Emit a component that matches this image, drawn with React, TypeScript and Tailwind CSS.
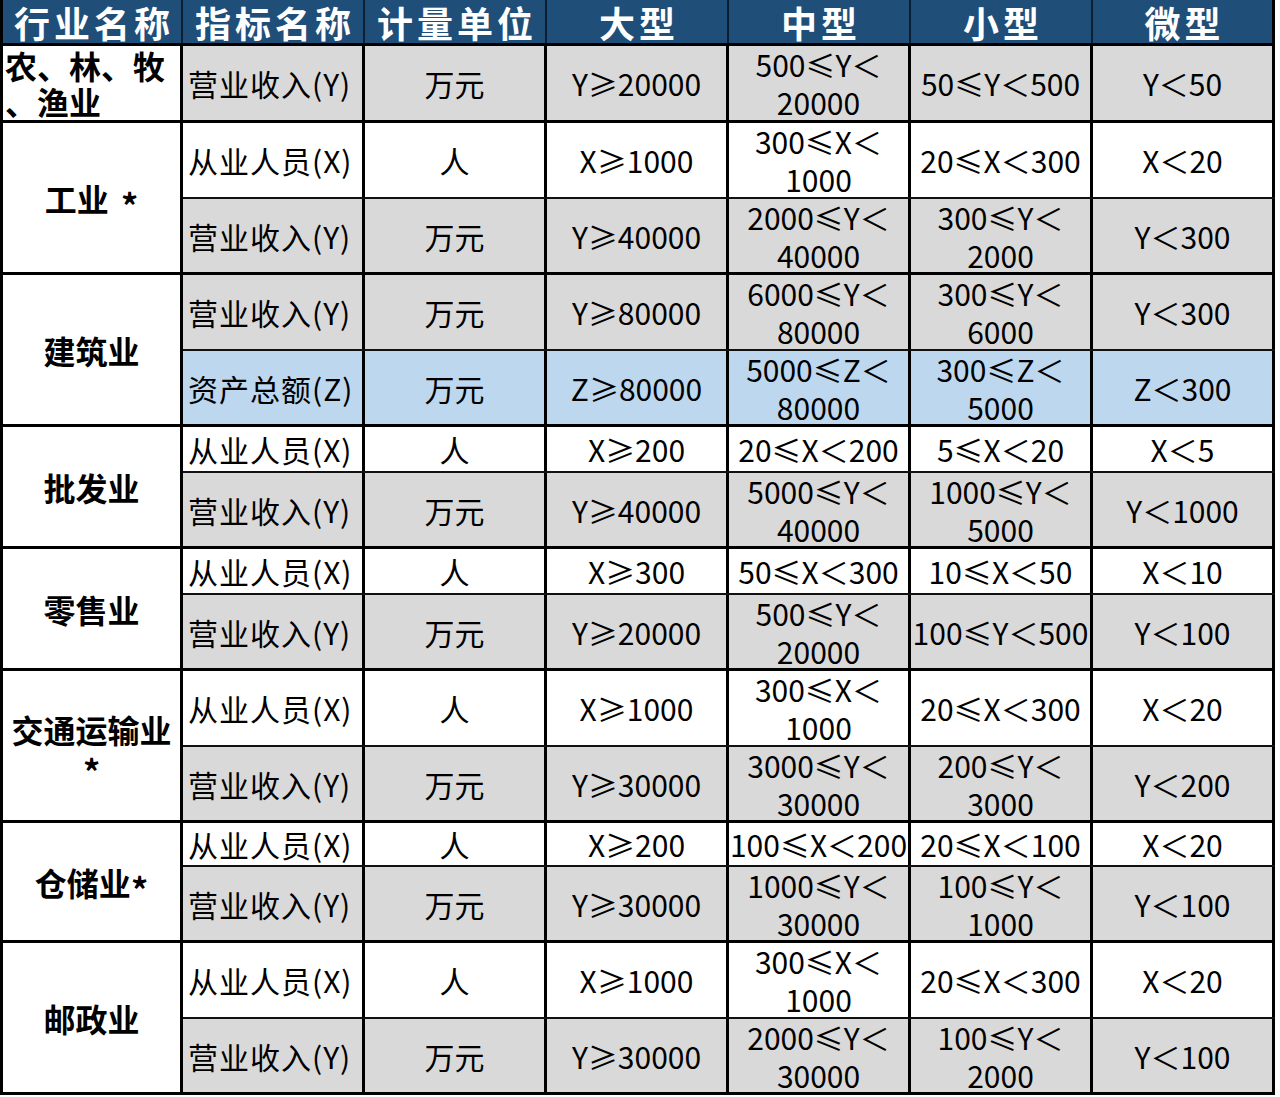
import clsx from 'clsx'

type Tone = 'white' | 'gray' | 'blue'

interface SubRow {
  metric: string
  unit: string
  values: string[][]
  tone: Tone
  height: string
}

interface Group {
  name: string[]
  star?: 'inline' | 'spaced' | 'below'
  align?: 'left' | 'center'
  rows: SubRow[]
}

const TONE_BG: Record<Tone, string> = {
  white: 'bg-white',
  gray: 'bg-[#d9d9d9]',
  blue: 'bg-[#bdd7ee]',
}

const HEADERS = ['行业名称', '指标名称', '计量单位', '大型', '中型', '小型', '微型']

const staff = (values: string[][], height: string): SubRow => ({
  metric: '从业人员(X)',
  unit: '人',
  values,
  tone: 'white',
  height,
})

const revenue = (values: string[][], height: string): SubRow => ({
  metric: '营业收入(Y)',
  unit: '万元',
  values,
  tone: 'gray',
  height,
})

const GROUPS: Group[] = [
  {
    name: ['农、林、牧', '、渔业'],
    align: 'left',
    rows: [revenue([['Y≥20000'], ['500≤Y＜', '20000'], ['50≤Y＜500'], ['Y＜50']], 'h-[74px]')],
  },
  {
    name: ['工业'],
    star: 'spaced',
    rows: [
      staff([['X≥1000'], ['300≤X＜', '1000'], ['20≤X＜300'], ['X＜20']], 'h-[76px]'),
      revenue([['Y≥40000'], ['2000≤Y＜', '40000'], ['300≤Y＜', '2000'], ['Y＜300']], 'h-[73px]'),
    ],
  },
  {
    name: ['建筑业'],
    rows: [
      revenue([['Y≥80000'], ['6000≤Y＜', '80000'], ['300≤Y＜', '6000'], ['Y＜300']], 'h-[76px]'),
      {
        metric: '资产总额(Z)',
        unit: '万元',
        values: [['Z≥80000'], ['5000≤Z＜', '80000'], ['300≤Z＜', '5000'], ['Z＜300']],
        tone: 'blue',
        height: 'h-[73px]',
      },
    ],
  },
  {
    name: ['批发业'],
    rows: [
      staff([['X≥200'], ['20≤X＜200'], ['5≤X＜20'], ['X＜5']], 'h-[46px]'),
      revenue([['Y≥40000'], ['5000≤Y＜', '40000'], ['1000≤Y＜', '5000'], ['Y＜1000']], 'h-[73px]'),
    ],
  },
  {
    name: ['零售业'],
    rows: [
      staff([['X≥300'], ['50≤X＜300'], ['10≤X＜50'], ['X＜10']], 'h-[46px]'),
      revenue([['Y≥20000'], ['500≤Y＜', '20000'], ['100≤Y＜500'], ['Y＜100']], 'h-[73px]'),
    ],
  },
  {
    name: ['交通运输业'],
    star: 'below',
    rows: [
      staff([['X≥1000'], ['300≤X＜', '1000'], ['20≤X＜300'], ['X＜20']], 'h-[76px]'),
      revenue([['Y≥30000'], ['3000≤Y＜', '30000'], ['200≤Y＜', '3000'], ['Y＜200']], 'h-[73px]'),
    ],
  },
  {
    name: ['仓储业'],
    star: 'inline',
    rows: [
      staff([['X≥200'], ['100≤X＜200'], ['20≤X＜100'], ['X＜20']], 'h-[44px]'),
      revenue([['Y≥30000'], ['1000≤Y＜', '30000'], ['100≤Y＜', '1000'], ['Y＜100']], 'h-[73px]'),
    ],
  },
  {
    name: ['邮政业'],
    rows: [
      staff([['X≥1000'], ['300≤X＜', '1000'], ['20≤X＜300'], ['X＜20']], 'h-[76px]'),
      revenue([['Y≥30000'], ['2000≤Y＜', '30000'], ['100≤Y＜', '2000'], ['Y＜100']], 'h-[73px]'),
    ],
  },
]

// asterisk sits mid-height in the original, not up at cap height
function Star({ className }: { className?: string }) {
  return <span className={clsx('inline-block translate-y-[7px] text-[34px]', className)}>*</span>
}

function Lines({ lines }: { lines: string[] }) {
  return (
    <div className="flex flex-col">
      {lines.map((line) => (
        <span key={line} className="whitespace-nowrap">
          {line}
        </span>
      ))}
    </div>
  )
}

function DataRow({ row, last }: { row: SubRow; last: boolean }) {
  return (
    <div className={clsx('flex', row.height, TONE_BG[row.tone], !last && 'border-b-2 border-[#111]')}>
      <div className="flex w-[182px] shrink-0 items-center border-r-[3px] border-black pl-[5px]">
        <span className="whitespace-nowrap tracking-[1px]">{row.metric}</span>
      </div>
      <div className="flex w-[182px] shrink-0 items-center justify-center border-r-[3px] border-black">
        {row.unit}
      </div>
      {row.values.map((value, i) => (
        <div
          key={i}
          className="flex w-[182px] shrink-0 items-center justify-center border-r-[3px] border-black text-center"
        >
          <Lines lines={value} />
        </div>
      ))}
    </div>
  )
}

function IndustryCell({ group }: { group: Group }) {
  return (
    <div
      className={clsx(
        'flex w-[183px] shrink-0 flex-col justify-center border-x-[3px] border-black bg-white text-[32px] font-bold leading-[36px]',
        group.align === 'left' ? 'items-start pl-[2px]' : 'items-center',
      )}
    >
      {group.name.map((line) => (
        <span key={line} className="whitespace-nowrap">
          {line}
          {group.star === 'spaced' && <Star className="ml-[12px]" />}
          {group.star === 'inline' && <Star />}
        </span>
      ))}
      {group.star === 'below' && (
        <span className="leading-[34px]">
          <Star />
        </span>
      )}
    </div>
  )
}

export default function App() {
  return (
    <div className="min-h-[1097px] bg-white">
      <div
        className="w-[1275px] text-[30px] leading-[38px] text-black"
        style={{ fontFamily: '"Noto Sans CJK SC", "Noto Sans", sans-serif' }}
      >
        <div className="flex h-[46px] border-b-[3px] border-black bg-[#1f4e79] text-[36px] font-bold leading-[42px] tracking-[4px] text-white">
          {HEADERS.map((h, i) => (
            <div
              key={h}
              className={clsx(
                'flex shrink-0 items-center justify-center border-r-2 border-[#0b1f33] pl-[4px]',
                i === 0 ? 'w-[183px] border-l-[3px] border-l-black' : 'w-[182px]',
                i === HEADERS.length - 1 && 'border-r-[3px] border-r-black',
              )}
            >
              {h}
            </div>
          ))}
        </div>

        {GROUPS.map((group) => (
          <div key={group.name.join('')} className="flex border-b-[3px] border-black">
            <IndustryCell group={group} />
            <div className="flex flex-col">
              {group.rows.map((row, i) => (
                <DataRow key={i} row={row} last={i === group.rows.length - 1} />
              ))}
            </div>
          </div>
        ))}
      </div>
    </div>
  )
}
